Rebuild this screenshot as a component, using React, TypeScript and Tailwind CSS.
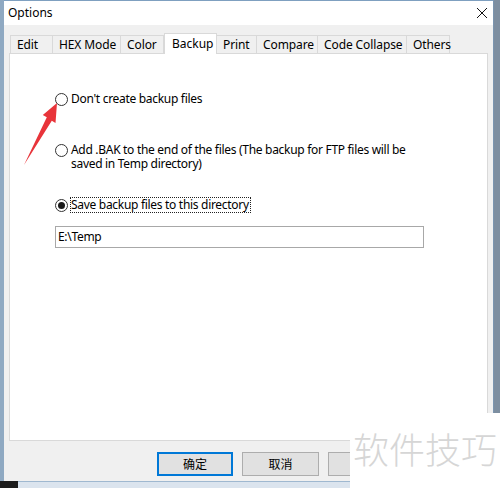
import React from 'react';

const font = "font-['Noto_Sans','Noto_Sans_CJK_SC',sans-serif]";

const tabs = [
  { label: 'Edit', w: 'w-[43px]' },
  { label: 'HEX Mode', w: 'w-[68px]' },
  { label: 'Color', w: 'w-[43px]' },
  { label: 'Backup', w: 'w-[53px]', active: true },
  { label: 'Print', w: 'w-[40px]' },
  { label: 'Compare', w: 'w-[61px]' },
  { label: 'Code Collapse', w: 'w-[89px]' },
  { label: 'Others', w: 'w-[43px]' },
];

const Radio = ({ checked = false }: { checked?: boolean }) => (
  <span className="w-[13px] h-[13px] shrink-0 rounded-full border border-[#333] bg-white flex items-center justify-center">
    {checked && <span className="w-[7px] h-[7px] rounded-full bg-[#1a1a1a]" />}
  </span>
);

export default function App() {
  return (
    <div className={`relative w-[500px] h-[488px] overflow-hidden flex flex-col bg-[#6d8296] ${font}`}>
      <div className="flex flex-1 min-h-0">
        {/* desktop strip left */}
        <div className="w-[4px] bg-[#8fa9c2]" />

        {/* dialog window */}
        <div className="w-[490px] flex flex-col bg-[#f0f0f0] border-r border-[#7b95b0]">
          <div className="h-[25px] bg-white flex items-center justify-between pl-[4px] pr-[5px] border-t border-[#7fa0c0]">
            <span className="text-[12px] text-black leading-none">Options</span>
            <svg width="12" height="12" viewBox="0 0 12 12">
              <path d="M1 1 L11 11 M11 1 L1 11" stroke="#111" strokeWidth="1" />
            </svg>
          </div>

          <div className="flex-1 flex flex-col pl-[5px] pt-[7px]">
            {/* tabs */}
            <div className="flex items-end h-[21px] pl-[1px]">
              {tabs.map((t) =>
                t.active ? (
                  <div
                    key={t.label}
                    className={`${t.w} h-[21px] -mb-[1px] relative z-10 bg-white border border-b-0 border-[#d9d9d9] pl-[7px] pt-[2px] text-[12px] leading-[16px] text-black`}
                  >
                    {t.label}
                  </div>
                ) : (
                  <div
                    key={t.label}
                    className={`${t.w} h-[18px] bg-[#f0f0f0] border border-b-0 border-l-0 first:border-l border-[#d9d9d9] pl-[6px] pt-[1px] text-[12px] leading-[16px] tracking-[-0.1px] text-black`}
                  >
                    {t.label}
                  </div>
                )
              )}
            </div>

            {/* panel */}
            <div className="w-[479px] h-[388px] bg-white border border-[#d9d9d9] flex flex-col pl-[45px] pt-[37px] text-[12px] tracking-[-0.3px] text-black">
              <div className="flex items-center h-[16px] gap-[3px]">
                <Radio />
                <span className="leading-[16px]">Don't create backup files</span>
              </div>

              <div className="flex items-start mt-[36px] gap-[3px]">
                <span className="mt-[1px]">
                  <Radio />
                </span>
                <span className="leading-[14px]">
                  Add .BAK to the end of the files (The backup for FTP files will be
                  <br />
                  saved in Temp directory)
                </span>
              </div>

              <div className="flex items-center h-[16px] mt-[26px] gap-[2px]">
                <Radio checked />
                <span className="leading-[14px] border border-dotted border-[#222] pr-[1px]">
                  Save backup files to this directory
                </span>
              </div>

              <div className="w-[369px] h-[22px] mt-[13px] border border-[#a8a8a8] bg-white flex items-center pl-[2px] leading-none">
                E:\Temp
              </div>
            </div>

            {/* buttons */}
            <div className="flex gap-[9px] pl-[148px] mt-[11px]">
              <button className="w-[76px] h-[24px] bg-[#e1e1e1] border-2 border-[#0078d7] text-[12px] text-black font-['Noto_Sans_CJK_SC',sans-serif]">
                确定
              </button>
              <button className="w-[77px] h-[24px] bg-[#e1e1e1] border border-[#adadad] text-[12px] text-black font-['Noto_Sans_CJK_SC',sans-serif]">
                取消
              </button>
              <button className="w-[77px] h-[24px] bg-[#e1e1e1] border border-[#adadad]" />
            </div>
          </div>
        </div>

        {/* desktop strip right */}
        <div className="flex-1 bg-[#7d8ea0]" />
      </div>

      {/* taskbar-ish strip below */}
      <div className="h-[7px] flex">
        <div className="w-[18px] bg-[#1c1c1c]" />
        <div className="flex-1 bg-[#dbe4ee] border-t border-[#9fb8d0]" />
      </div>

      {/* red arrow annotation */}
      <svg className="absolute left-0 top-0 pointer-events-none" width="500" height="488">
        <polygon
          points="57,103 55.5,123 51.8,120.8 24,165 46.8,117.2 42.8,115"
          fill="#e8343a"
        />
      </svg>

      {/* watermark */}
      <div className="absolute left-[350px] top-[413px] w-[150px] h-[75px] bg-white flex items-start pl-[3px] pt-[15px]">
        <span className="text-[36px] leading-[40px] font-light text-[#d6d6d6] font-['Noto_Sans_CJK_SC',sans-serif]">
          软件技巧
        </span>
      </div>
    </div>
  );
}
